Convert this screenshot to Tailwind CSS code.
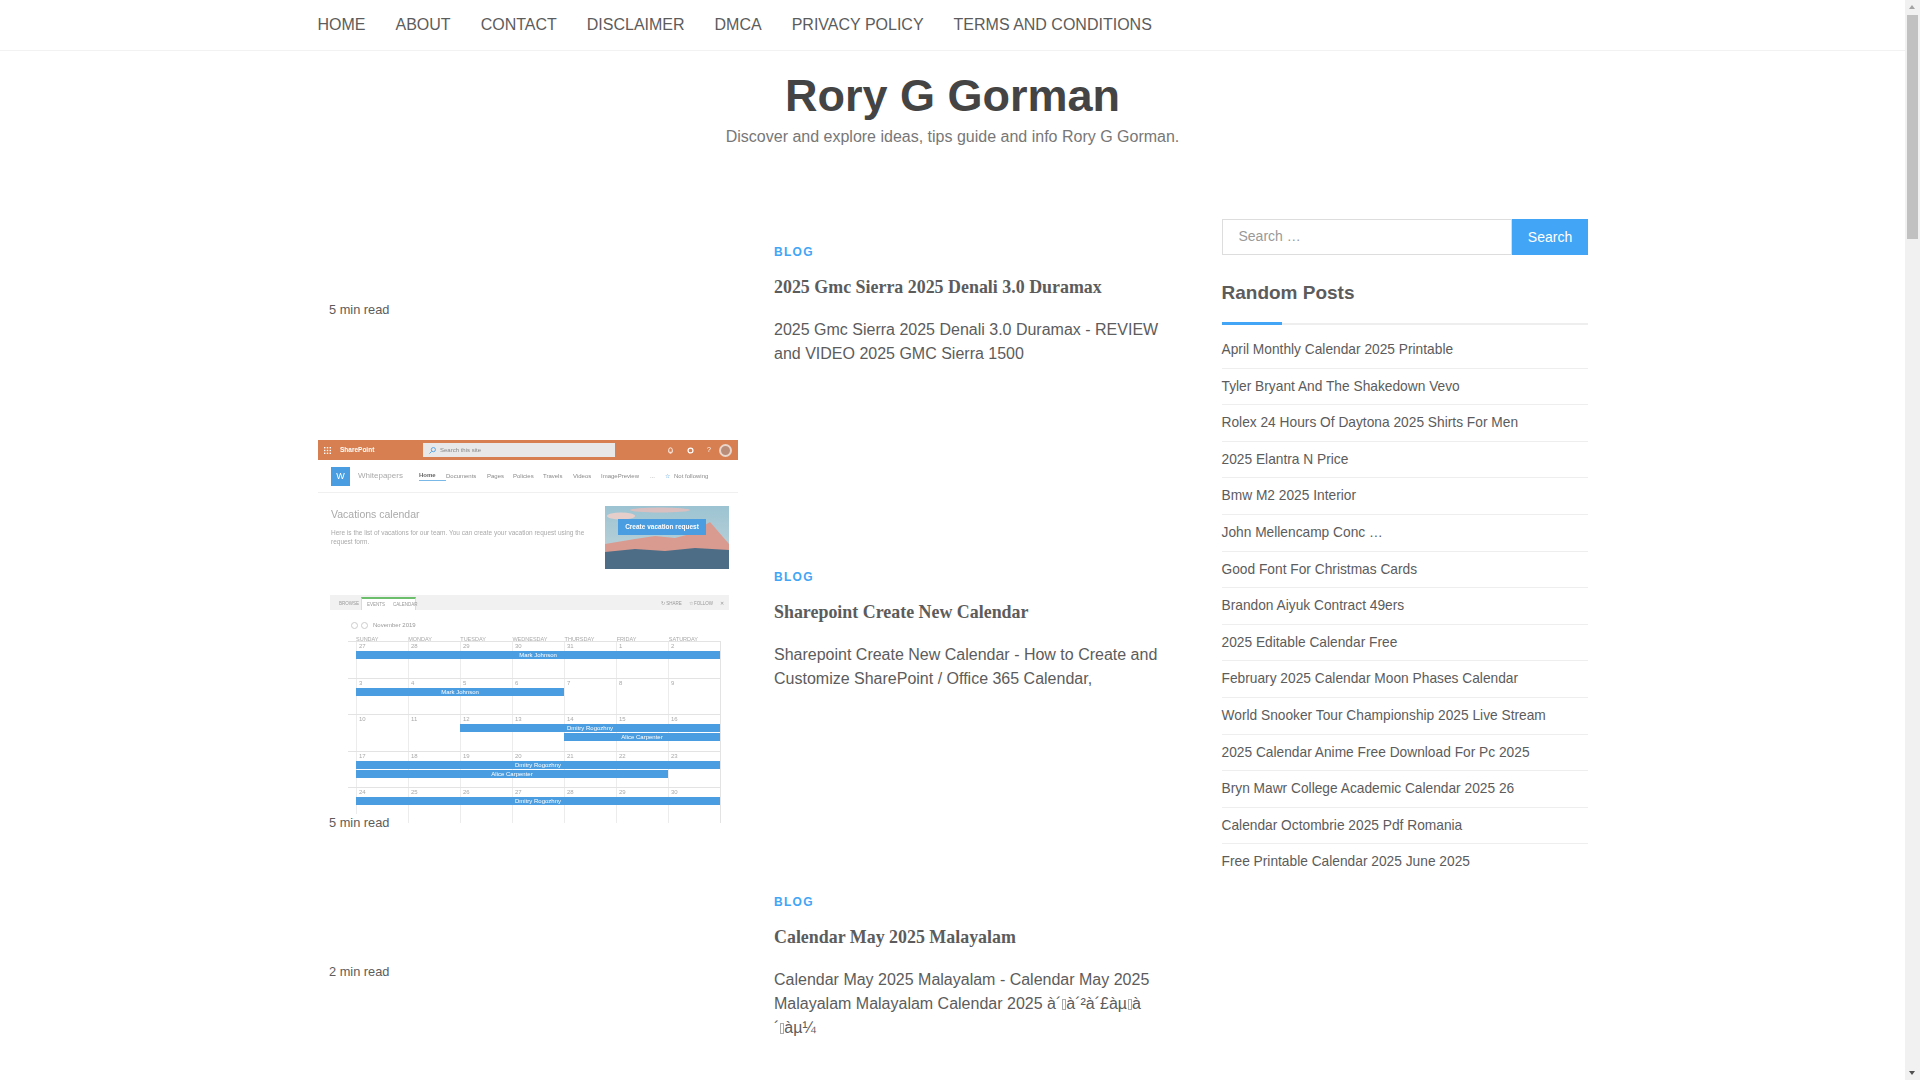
<!DOCTYPE html>
<html lang="en">
<head>
<meta charset="utf-8">
<title>Rory G Gorman</title>
<script src="https://cdn.jsdelivr.net/npm/@tailwindcss/browser@4"></script>
</head>
<body class="bg-white">
<div class="relative h-screen overflow-hidden font-['Liberation_Sans',Arial,sans-serif] text-[#5c5c5c]">

  <!-- Top nav -->
  <div class="w-[1905px] h-[51px] border-b border-[#f2f2f2]">
    <nav class="w-[1270px] mx-auto flex gap-[30px] text-base leading-[49px] text-[#5c5c5c]">
      <a>HOME</a><a>ABOUT</a><a>CONTACT</a><a>DISCLAIMER</a><a>DMCA</a><a>PRIVACY POLICY</a><a>TERMS AND CONDITIONS</a>
    </nav>
  </div>

  <!-- Site title -->
  <div class="w-[1905px] text-center pt-[20px]">
    <h1 class="text-[45px] leading-[50px] font-bold text-[#444]">Rory G Gorman</h1>
    <p class="mt-[4px] text-base leading-6 text-[#777]">Discover and explore ideas, tips guide and info Rory G Gorman.</p>
  </div>

  <!-- Main -->
  <div class="w-[1270px] ml-[318px] mt-[70px] flex">
    <div class="w-[855.5px] shrink-0">

      <!-- Article 1 -->
      <article class="flex h-[325px]">
        <div class="relative w-[456px] shrink-0">
          <span class="absolute left-0 top-[82px] bg-white pl-[11px] pr-[7px] text-[12.8px] leading-[18px]">5 min read</span>
        </div>
        <div class="w-[386px] pt-[24px]">
          <a class="block text-xs leading-[18px] font-bold tracking-[1.3px] text-[#42a5f5]">BLOG</a>
          <h2 class="mt-[13px] font-['Liberation_Serif',serif] text-[17.92px] leading-[26px] font-bold text-[#5c5c5c]">2025 Gmc Sierra 2025 Denali 3.0 Duramax</h2>
          <p class="mt-[18px] text-base leading-6">2025 Gmc Sierra 2025 Denali 3.0 Duramax - REVIEW and VIDEO 2025 GMC Sierra 1500</p>
        </div>
      </article>

      <!-- Article 2 -->
      <article class="flex h-[325px]">
        <div class="relative w-[456px] shrink-0">
          <!-- SharePoint screenshot -->
          <div class="absolute left-0 top-[-104px] w-[420px] h-[383px] overflow-hidden bg-white blur-[0.5px] text-[#8a8a8a]">
            <div class="flex items-center h-[20px] bg-[#d77f50] text-white">
              <svg class="ml-[6px] w-[7px] h-[7px]" viewBox="0 0 7 7" fill="#fff"><rect width="1.4" height="1.4"/><rect x="2.8" width="1.4" height="1.4"/><rect x="5.6" width="1.4" height="1.4"/><rect y="2.8" width="1.4" height="1.4"/><rect x="2.8" y="2.8" width="1.4" height="1.4"/><rect x="5.6" y="2.8" width="1.4" height="1.4"/><rect y="5.6" width="1.4" height="1.4"/><rect x="2.8" y="5.6" width="1.4" height="1.4"/><rect x="5.6" y="5.6" width="1.4" height="1.4"/></svg>
              <span class="ml-[9px] w-[83px] text-[6.5px] font-bold">SharePoint</span>
              <div class="flex items-center w-[192px] h-[14px] bg-[#e8e8e8] text-[#888] text-[6px]">
                <svg class="ml-[6px] w-[7px] h-[7px]" viewBox="0 0 8 8" fill="none" stroke="#4a9de0"><circle cx="5" cy="3" r="2.4"/><path d="M3 5 0.5 7.5"/></svg>
                <span class="ml-[4px]">Search this site</span>
              </div>
              <svg class="ml-[52px] w-[7px] h-[7px]" viewBox="0 0 8 8" fill="none" stroke="#fff"><path d="M2 6V3a2 2 0 0 1 4 0v3ZM3 7h2"/></svg>
              <svg class="ml-[13px] w-[7px] h-[7px]" viewBox="0 0 8 8" fill="none" stroke="#fff" stroke-width="1.4"><circle cx="4" cy="4" r="2.8"/></svg>
              <span class="ml-[13px] w-[6px] text-[7px]">?</span>
              <div class="ml-[6px] w-[13px] h-[13px] rounded-full bg-[#b98c78] border-2 border-[#e9d6cb]"></div>
            </div>
            <div class="flex items-center h-[33px] border-b border-[#f0f0f0] text-[6px]">
              <div class="ml-[13px] w-[19px] h-[19px] bg-[#4a9de0] text-white text-[9px] leading-[19px] text-center">W</div>
              <span class="ml-[8px] w-[61px] text-[8px] text-[#aaa]">Whitepapers</span>
              <span class="w-[27px] text-[#666] font-bold border-b border-[#7ab8e8]">Home</span>
              <span class="w-[41px]">Documents</span>
              <span class="w-[26px]">Pages</span>
              <span class="w-[30px]">Policies</span>
              <span class="w-[30px]">Travels</span>
              <span class="w-[28px]">Videos</span>
              <span class="w-[49px]">ImagePreview</span>
              <span class="w-[15px]">...</span>
              <span class="text-[#4a9de0] w-[9px]">☆</span>
              <span>Not following</span>
            </div>
            <div class="flex h-[102px] pl-[13px]">
              <div class="w-[274px] pt-[14px]">
                <p class="text-[10.5px] leading-[14px] text-[#aaa]">Vacations calendar</p>
                <p class="mt-[7px] w-[260px] text-[6.5px] leading-[9px] text-[#aaa]">Here is the list of vacations for our team. You can create your vacation request using the request form.</p>
              </div>
              <div class="relative mt-[13px] w-[124px] h-[63px] overflow-hidden bg-gradient-to-b from-[#9cc3d2] to-[#c4d6da]">
                <svg class="absolute inset-0 w-full h-full" viewBox="0 0 124 63">
                  <ellipse cx="16" cy="10" rx="14" ry="3.5" fill="#e6cfcb"/>
                  <ellipse cx="55" cy="4" rx="30" ry="2.5" fill="#d9bfbf"/>
                  <polygon points="0,38 12,36 30,33 50,30 70,32 85,28 105,16 124,38 124,50 0,50" fill="#d99b90"/>
                  <polygon points="0,46 30,43 60,45 90,42 124,44 124,63 0,63" fill="#4d6d87"/>
                </svg>
                <div class="absolute left-[13px] top-[13px] w-[88px] h-[16px] bg-[#4a9de0] text-white text-[6.5px] font-bold leading-[16px] text-center">Create vacation request</div>
              </div>
            </div>
            <div class="flex items-end justify-between h-[15px] ml-[12px] w-[399px] bg-[#f1f1f1] text-[4.5px] text-[#999]">
              <div class="flex items-end">
                <span class="ml-[9px] w-[22px] leading-[13px]">BROWSE</span>
                <div class="flex gap-[8px] w-[55px] h-[13px] pl-[5px] leading-[12px] bg-white border-x border-t-2 border-x-[#cfe3cf] border-t-[#6cbd6c]"><span>EVENTS</span><span>CALENDAR</span></div>
              </div>
              <div class="flex gap-[7px] pr-[5px] leading-[13px]"><span>↻ SHARE</span><span>☆ FOLLOW</span><span>✕</span></div>
            </div>
            <div class="flex items-center h-[14px] mt-[8px] ml-[33px] gap-[3px] text-[6px] text-[#999]">
              <span class="w-[7px] h-[7px] rounded-full border border-[#ccc]"></span>
              <span class="w-[7px] h-[7px] rounded-full border border-[#ccc]"></span>
              <span class="ml-[2px]">November 2019</span>
            </div>
            <div id="calendar" class="ml-[30px] mt-[3px] w-[373px]"></div>
          </div>
          <span class="absolute left-0 top-[270px] bg-white pl-[11px] pr-[7px] text-[12.8px] leading-[18px]">5 min read</span>
        </div>
        <div class="w-[386px] pt-[24px]">
          <a class="block text-xs leading-[18px] font-bold tracking-[1.3px] text-[#42a5f5]">BLOG</a>
          <h2 class="mt-[13px] font-['Liberation_Serif',serif] text-[17.92px] leading-[26px] font-bold text-[#5c5c5c]">Sharepoint Create New Calendar</h2>
          <p class="mt-[18px] text-base leading-6">Sharepoint Create New Calendar - How to Create and Customize SharePoint / Office 365 Calendar,</p>
        </div>
      </article>

      <!-- Article 3 -->
      <article class="flex h-[325px]">
        <div class="relative w-[456px] shrink-0">
          <span class="absolute left-0 top-[94px] bg-white pl-[11px] pr-[7px] text-[12.8px] leading-[18px]">2 min read</span>
        </div>
        <div class="w-[386px] pt-[24px]">
          <a class="block text-xs leading-[18px] font-bold tracking-[1.3px] text-[#42a5f5]">BLOG</a>
          <h2 class="mt-[13px] font-['Liberation_Serif',serif] text-[17.92px] leading-[26px] font-bold text-[#5c5c5c]">Calendar May 2025 Malayalam</h2>
          <!-- the empty boxes are the unprintable bytes of the broken encoding -->
          <p class="mt-[18px] text-base leading-6">Calendar May 2025 Malayalam - Calendar May 2025 Malayalam Malayalam Calendar 2025 à´<span class="inline-block w-[4px] h-[11px] mx-[0.5px] border border-[#aaa] align-[-1px]"></span>à´²à´£àµ<span class="inline-block w-[4px] h-[11px] mx-[0.5px] border border-[#aaa] align-[-1px]"></span>à<br>´<span class="inline-block w-[4px] h-[11px] mx-[0.5px] border border-[#aaa] align-[-1px]"></span>àµ¼</p>
        </div>
      </article>
    </div>

    <!-- Sidebar -->
    <aside class="ml-[48px] w-[366.5px] shrink-0">
      <form class="flex h-[36px]">
        <div class="w-[290.5px] border border-[#ddd] pl-[16px] text-sm leading-[32px] text-[#999]">Search …</div>
        <button class="w-[76px] bg-[#42a5f5] text-white text-sm">Search</button>
      </form>
      <h3 class="mt-[26px] text-[19px] leading-[24px] font-bold text-[#5c5c5c]">Random Posts</h3>
      <div class="relative mt-[18px] h-[2px] bg-[#eee]">
        <div class="absolute left-0 top-[-1px] w-[60px] h-[3px] bg-[#42a5f5]"></div>
      </div>
      <ul class="mt-[7px] text-[13.75px] text-[#5c5c5c]">
        <li class="h-[36.6px] leading-[35px] border-b border-[#eee]">April Monthly Calendar 2025 Printable</li>
        <li class="h-[36.6px] leading-[35px] border-b border-[#eee]">Tyler Bryant And The Shakedown Vevo</li>
        <li class="h-[36.6px] leading-[35px] border-b border-[#eee]">Rolex 24 Hours Of Daytona 2025 Shirts For Men</li>
        <li class="h-[36.6px] leading-[35px] border-b border-[#eee]">2025 Elantra N Price</li>
        <li class="h-[36.6px] leading-[35px] border-b border-[#eee]">Bmw M2 2025 Interior</li>
        <li class="h-[36.6px] leading-[35px] border-b border-[#eee]">John Mellencamp Conc …</li>
        <li class="h-[36.6px] leading-[35px] border-b border-[#eee]">Good Font For Christmas Cards</li>
        <li class="h-[36.6px] leading-[35px] border-b border-[#eee]">Brandon Aiyuk Contract 49ers</li>
        <li class="h-[36.6px] leading-[35px] border-b border-[#eee]">2025 Editable Calendar Free</li>
        <li class="h-[36.6px] leading-[35px] border-b border-[#eee]">February 2025 Calendar Moon Phases Calendar</li>
        <li class="h-[36.6px] leading-[35px] border-b border-[#eee]">World Snooker Tour Championship 2025 Live Stream</li>
        <li class="h-[36.6px] leading-[35px] border-b border-[#eee]">2025 Calendar Anime Free Download For Pc 2025</li>
        <li class="h-[36.6px] leading-[35px] border-b border-[#eee]">Bryn Mawr College Academic Calendar 2025 26</li>
        <li class="h-[36.6px] leading-[35px] border-b border-[#eee]">Calendar Octombrie 2025 Pdf Romania</li>
        <li class="h-[36.6px] leading-[35px]">Free Printable Calendar 2025 June 2025</li>
      </ul>
    </aside>
  </div>

  <!-- Scrollbar -->
  <div class="absolute right-0 top-0 bottom-0 w-[15px] bg-[#f1f1f1]">
    <div class="absolute left-[4px] top-[5px] w-0 h-0 border-x-[3.5px] border-x-transparent border-b-[4px] border-b-[#a3a3a3]"></div>
    <div class="absolute left-[2px] top-[15px] w-[11px] h-[224px] bg-[#c1c1c1]"></div>
    <div class="absolute left-[4px] bottom-[5px] w-0 h-0 border-x-[3.5px] border-x-transparent border-t-[4px] border-t-[#505050]"></div>
  </div>
</div>

<script>
// Calendar inside the SharePoint screenshot
const weeks = [
  { days: [27, 28, 29, 30, 31, 1, 2], events: [{ start: 1, span: 7, name: "Mark Johnson" }] },
  { days: [3, 4, 5, 6, 7, 8, 9], events: [{ start: 1, span: 4, name: "Mark Johnson" }] },
  { days: [10, 11, 12, 13, 14, 15, 16], events: [{ start: 3, span: 5, name: "Dmitry Rogozhny" }, { start: 5, span: 3, name: "Alice Carpenter" }] },
  { days: [17, 18, 19, 20, 21, 22, 23], events: [{ start: 1, span: 7, name: "Dmitry Rogozhny" }, { start: 1, span: 6, name: "Alice Carpenter" }] },
  { days: [24, 25, 26, 27, 28, 29, 30], events: [{ start: 1, span: 7, name: "Dmitry Rogozhny" }] },
];
const labels = ["SUNDAY", "MONDAY", "TUESDAY", "WEDNESDAY", "THURSDAY", "FRIDAY", "SATURDAY"];

function renderWeek(week) {
  const cells = week.days
    .map((d) => `<div class="h-[35.5px] border-l border-[#ececec] pl-[2px] text-[6px] leading-[9px] text-[#aaa]">${d}</div>`)
    .join("");
  const events = week.events
    .map((e) => `<div class="h-[8px] mb-[1px] bg-[#4a9de0] text-white text-[6px] leading-[8px] text-center" style="grid-column: ${e.start} / span ${e.span}">${e.name}</div>`)
    .join("");
  return `
    <div class="relative border-t border-[#e3e3e3] border-r pl-[8px]">
      <div class="grid grid-cols-7">${cells}</div>
      <div class="absolute left-[8px] right-0 top-[9px] grid grid-cols-7">${events}</div>
    </div>`;
}

document.getElementById("calendar").innerHTML =
  `<div class="grid grid-cols-7 pl-[8px] mt-[4px] mb-[-2px] text-[5.5px] leading-[7px] text-[#aaa]">${labels.map((l) => `<span>${l}</span>`).join("")}</div>` +
  weeks.map(renderWeek).join("");
</script>
</body>
</html>
